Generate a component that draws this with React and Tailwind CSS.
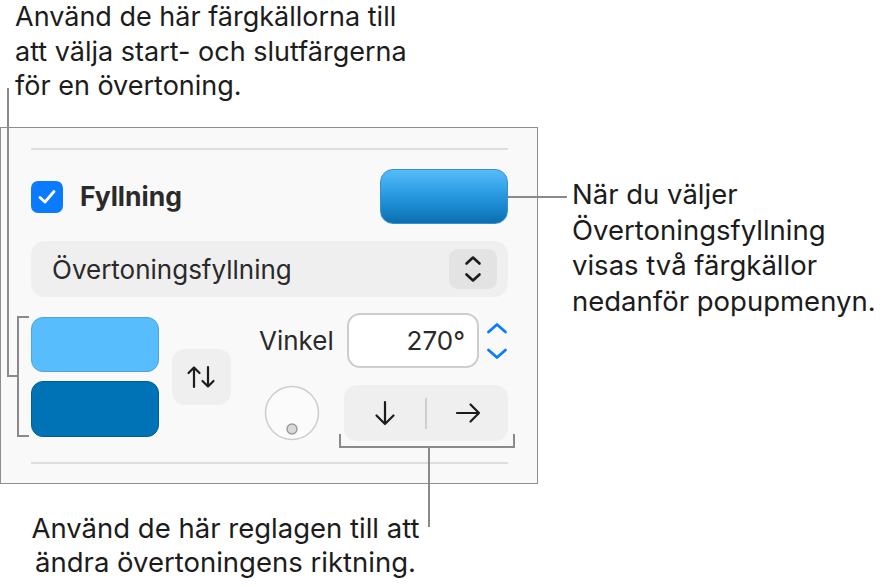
export default function App() {
  return (
    <div className="relative w-[886px] h-[587px] bg-white overflow-hidden text-[#1c1c1c] font-[family-name:Inter,sans-serif]">
      <p className="ml-[15px] pt-0 text-[27px] leading-[34.5px]">
        Använd de här färgkällorna till
        <br />
        att välja start- och slutfärgerna
        <br />
        för en övertoning.
      </p>

      <div className="flex mt-[23.5px] items-start">
        {/* Panel */}
        <div className="w-[538px] h-[357px] border border-[#8e8e8e] bg-[#f9f9f9] pt-[20px] pl-[30px] pr-[29px] flex flex-col">
          <div className="h-[2px] bg-[#dedede]" />

          {/* Row 1 */}
          <div className="mt-[19px] h-[55px] flex items-center">
            <div className="w-[32px] h-[32px] rounded-[7px] bg-[#0a7aff] flex items-center justify-center">
              <svg width="20" height="16" viewBox="0 0 20 16" fill="none">
                <path d="M3 8.5 L8 13 L17 2.5" stroke="white" strokeWidth="2.8" strokeLinecap="round" strokeLinejoin="round" />
              </svg>
            </div>
            <span className="ml-[17px] text-[26.5px] font-bold text-[#2a2a2a]">Fyllning</span>
            <div className="ml-auto w-[128px] h-[55px] rounded-[13px] border border-[#3b8fc9] bg-[linear-gradient(to_bottom,#55bcfb,#2294db_55%,#0a6fb0)]" />
          </div>

          {/* Popup */}
          <div className="mt-[17px] h-[56px] rounded-[14px] bg-[#efefef] flex items-center pl-[21px] pr-[11px]">
            <span className="text-[26px] text-[#2a2a2a]">Övertoningsfyllning</span>
            <div className="ml-auto w-[48px] h-[40px] rounded-[9px] bg-[#e3e3e3] flex items-center justify-center">
              <svg width="18" height="28" viewBox="0 0 18 28" fill="none">
                <path d="M2.5 8.5 L9 2.5 L15.5 8.5" stroke="#1c1c1c" strokeWidth="2.6" strokeLinecap="round" strokeLinejoin="round" />
                <path d="M2.5 19.5 L9 25.5 L15.5 19.5" stroke="#1c1c1c" strokeWidth="2.6" strokeLinecap="round" strokeLinejoin="round" />
              </svg>
            </div>
          </div>

          {/* Row 3 */}
          <div className="mt-[16px] h-[128px] flex items-start">
            <div className="mt-[4px] flex flex-col gap-[9px]">
              <div className="w-[128px] h-[55px] rounded-[12px] bg-[#57bdfd] border border-[#4aa4df]" />
              <div className="w-[128px] h-[56px] rounded-[12px] bg-[#0073b6] border border-[#005f98]" />
            </div>
            <div className="ml-[13px] mt-[36px] w-[59px] h-[56px] rounded-[13px] bg-[#efefef] flex items-center justify-center">
              <svg width="32" height="24" viewBox="0 0 32 24" fill="none">
                <path d="M8 22 L8 2.5 M2.5 8 L8 2.5 L13.5 8" stroke="#1c1c1c" strokeWidth="2.2" strokeLinecap="round" strokeLinejoin="round" />
                <path d="M22 2 L22 21.5 M16.5 16 L22 21.5 L27.5 16" stroke="#1c1c1c" strokeWidth="2.2" strokeLinecap="round" strokeLinejoin="round" />
              </svg>
            </div>

            <div className="flex flex-col">
              <div className="h-[55px] flex items-center">
                <span className="ml-[28px] w-[72px] text-[26px] text-[#2a2a2a]">Vinkel</span>
                <div className="ml-[16px] w-[132px] h-[55px] rounded-[13px] border-2 border-[#cdcdcd] bg-white flex items-center justify-end pr-[12px]">
                  <span className="text-[26px] text-[#2a2a2a]">270°</span>
                </div>
                <svg className="ml-[7px]" width="22" height="38" viewBox="0 0 22 38" fill="none">
                  <path d="M2.5 10 L11 2.5 L19.5 10" stroke="#0a7aff" strokeWidth="2.8" strokeLinecap="round" strokeLinejoin="round" />
                  <path d="M2.5 28 L11 35.5 L19.5 28" stroke="#0a7aff" strokeWidth="2.8" strokeLinecap="round" strokeLinejoin="round" />
                </svg>
              </div>
              <div className="mt-[17px] h-[56px] flex items-center">
                <svg className="ml-[33px]" width="56" height="56" viewBox="0 0 56 56" fill="none">
                  <circle cx="28" cy="28" r="26.5" fill="#fbfbfb" stroke="#cfcfcf" strokeWidth="1.6" />
                  <circle cx="28" cy="44" r="5" fill="#d9d9d9" stroke="#9a9a9a" strokeWidth="1.4" />
                </svg>
                <div className="ml-[24px] w-[164px] h-[56px] rounded-[13px] bg-[#efefef] flex items-center">
                  <div className="flex-1 flex justify-center">
                    <svg width="22" height="26" viewBox="0 0 22 26" fill="none">
                      <path d="M11 2 L11 24 M2.5 15.5 L11 24 L19.5 15.5" stroke="#1c1c1c" strokeWidth="2.2" strokeLinecap="round" strokeLinejoin="round" />
                    </svg>
                  </div>
                  <div className="w-[2px] h-[31px] bg-[#cfcfcf]" />
                  <div className="flex-1 flex justify-center">
                    <svg width="26" height="22" viewBox="0 0 26 22" fill="none">
                      <path d="M2 11 L24 11 M15.5 2.5 L24 11 L15.5 19.5" stroke="#1c1c1c" strokeWidth="2.2" strokeLinecap="round" strokeLinejoin="round" />
                    </svg>
                  </div>
                </div>
              </div>
            </div>
          </div>

          <div className="mt-[21px] h-[2px] bg-[#dedede]" />
        </div>

        {/* Right text */}
        <p className="ml-[34px] mt-[50px] text-[27.5px] leading-[35.5px] whitespace-nowrap">
          När du väljer
          <br />
          Övertoningsfyllning
          <br />
          visas två färgkällor
          <br />
          nedanför popupmenyn.
        </p>
      </div>

      <p className="w-[451px] mt-[27px] text-center text-[27.5px] leading-[34px] whitespace-nowrap">
        Använd de här reglagen till att
        <br />
        ändra övertoningens riktning.
      </p>

      {/* Callout lines (overlay) */}
      <div className="absolute left-[7px] top-[88px] w-[2px] h-[289px] bg-[#8a8a8a]" />
      <div className="absolute left-[7px] top-[375px] w-[12px] h-[2px] bg-[#8a8a8a]" />
      <div className="absolute left-[17px] top-[316px] w-[2px] h-[121px] bg-[#8a8a8a]" />
      <div className="absolute left-[17px] top-[316px] w-[12px] h-[2px] bg-[#8a8a8a]" />
      <div className="absolute left-[17px] top-[435px] w-[12px] h-[2px] bg-[#8a8a8a]" />

      <div className="absolute left-[508px] top-[196px] w-[59px] h-[2px] bg-[#8a8a8a]" />

      <div className="absolute left-[339px] top-[446px] w-[176px] h-[2px] bg-[#8a8a8a]" />
      <div className="absolute left-[339px] top-[434px] w-[2px] h-[14px] bg-[#8a8a8a]" />
      <div className="absolute left-[513px] top-[434px] w-[2px] h-[14px] bg-[#8a8a8a]" />
      <div className="absolute left-[428px] top-[446px] w-[2px] h-[81px] bg-[#8a8a8a]" />
    </div>
  );
}
